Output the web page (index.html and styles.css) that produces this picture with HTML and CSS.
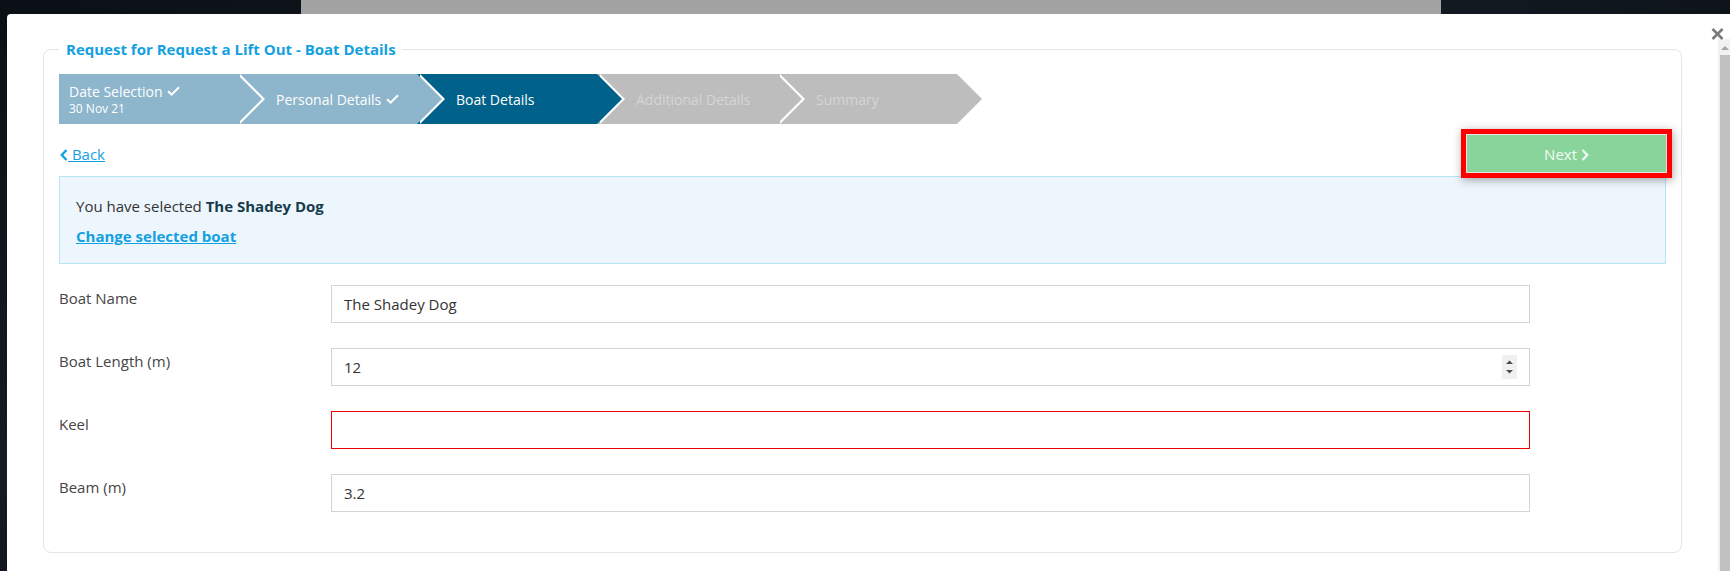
FILE: index.html
```html
<!DOCTYPE html>
<html lang="en">
<head>
<meta charset="utf-8">
<title>Request a Lift Out - Boat Details</title>
<link rel="stylesheet" href="styles.css">
</head>
<body>
<div class="desk">
  <div class="behind-bar"></div>
  <div class="modal">
    <button class="close" type="button" aria-label="Close">
      <svg width="13" height="12" viewBox="0 0 13 12"><path d="M1.5 1 L11.5 11 M11.5 1 L1.5 11" stroke="#7a7a7a" stroke-width="2.6" fill="none"/></svg>
    </button>
    <div class="modal-body">
      <fieldset class="panel">
        <legend class="panel-title">Request for Request a Lift Out - Boat Details</legend>
        <ol class="steps">
          <li class="step done">
            <span class="step-name">Date Selection <svg class="tick" width="13" height="10" viewBox="0 0 13 10"><path d="M1 5.2 L4.6 8.6 L12 1.2" stroke="#fff" stroke-width="2" fill="none"/></svg></span>
            <span class="step-sub">30 Nov 21</span>
          </li>
          <li class="step done">
            <span class="step-name">Personal Details <svg class="tick" width="13" height="10" viewBox="0 0 13 10"><path d="M1 5.2 L4.6 8.6 L12 1.2" stroke="#fff" stroke-width="2" fill="none"/></svg></span>
          </li>
          <li class="step current"><span class="step-name">Boat Details</span></li>
          <li class="step todo"><span class="step-name">Additional Details</span></li>
          <li class="step todo"><span class="step-name">Summary</span></li>
        </ol>
        <div class="nav-row">
          <a class="back" href="#"><svg class="chev-left" width="8" height="12" viewBox="0 0 8 12"><path d="M6.5 1 L1.8 6 L6.5 11" stroke="#13a0e2" stroke-width="2.4" fill="none"/></svg> Back</a>
          <button class="next" type="button">Next <svg class="chev-right" width="8" height="12" viewBox="0 0 8 12"><path d="M1.5 1 L6.2 6 L1.5 11" stroke="#eef8f0" stroke-width="2.4" fill="none"/></svg></button>
        </div>
        <div class="alert">
          <p>You have selected <strong>The Shadey Dog</strong></p>
          <p><a class="change" href="#">Change selected boat</a></p>
        </div>
        <div class="form">
          <div class="form-row">
            <label for="bname">Boat Name</label>
            <input id="bname" type="text" value="The Shadey Dog">
          </div>
          <div class="form-row">
            <label for="blen">Boat Length (m)</label>
            <div class="num-wrap">
              <input id="blen" type="text" value="12">
              <span class="spinner" aria-hidden="true">
                <svg width="15" height="24" viewBox="0 0 15 24"><path d="M4 9 L7.5 5.5 L11 9 Z" fill="#4d4d4d"/><path d="M4 15 L7.5 18.5 L11 15 Z" fill="#4d4d4d"/></svg>
              </span>
            </div>
          </div>
          <div class="form-row">
            <label for="keel">Keel</label>
            <input id="keel" class="invalid" type="text" value="">
          </div>
          <div class="form-row">
            <label for="beam">Beam (m)</label>
            <input id="beam" type="text" value="3.2">
          </div>
        </div>
      </fieldset>
    </div>
    <div class="scrollbar" aria-hidden="true">
      <span class="sb-arrow"><svg width="8" height="5" viewBox="0 0 8 5"><path d="M0 5 L4 1 L8 5 Z" fill="#a3a3a3"/></svg></span>
      <span class="sb-thumb"></span>
    </div>
  </div>
</div>
</body>
</html>
```

FILE: styles.css
```css
html, body {
  margin: 0;
  padding: 0;
}

body {
  width: 1730px;
  height: 571px;
  overflow: hidden;
  background: linear-gradient(160deg, #0b1016 0%, #141c24 40%, #06090d 70%, #111920 100%);
  font-family: "Open Sans", "Noto Sans", sans-serif;
  font-size: 15px;
  color: #333;
}

.desk {
  display: flex;
  flex-direction: column;
  height: 571px;
}

.behind-bar {
  flex: none;
  height: 14px;
  width: 1140px;
  margin-left: 301px;
  background: #a3a3a3;
}

.modal {
  flex: 1;
  position: relative;
  display: flex;
  margin-left: 7px;
  background: #fff;
  border-top-left-radius: 4px;
}

.close {
  position: absolute;
  top: 14px;
  right: 6px;
  width: 13px;
  height: 12px;
  padding: 0;
  border: 0;
  background: none;
  line-height: 0;
}

.modal-body {
  flex: 1;
  min-width: 0;
  padding: 25px 36px 0 36px;
}

.scrollbar {
  flex: none;
  width: 12px;
  margin-top: 25px;
  background: #f1f1f1;
  display: flex;
  flex-direction: column;
  align-items: flex-end;
}

.sb-arrow {
  width: 10px;
  height: 16px;
  display: flex;
  align-items: center;
  justify-content: center;
}

.sb-thumb {
  width: 10px;
  flex: 1;
  background: #c1c1c1;
}

/* panel */
.panel {
  margin: 0;
  min-width: 0;
  border: 1px solid #e3e5e7;
  border-radius: 8px;
  padding: 0 15px 15px;
}

.panel-title {
  padding: 0 6px 0 7px;
  font-size: 15px;
  font-weight: 700;
  line-height: 20px;
  color: #13a0e2;
}

/* wizard steps */
.steps {
  list-style: none;
  margin: 15px 0 0;
  padding: 0;
  display: flex;
  height: 50px;
}

.step {
  --c: #8db5cc;
  position: relative;
  flex: none;
  width: 180px;
  height: 50px;
  box-sizing: border-box;
  padding-left: 39px;
  display: flex;
  flex-direction: column;
  justify-content: center;
  background: var(--c);
  color: #fff;
  font-size: 14px;
  line-height: 19px;
  white-space: nowrap;
}

.step:first-child {
  width: 178px;
  padding-left: 10px;
}

.step::after,
.step::before {
  content: "";
  position: absolute;
  top: 0;
  width: 0;
  height: 0;
  border-top: 25px solid transparent;
  border-bottom: 25px solid transparent;
}

.step::after {
  right: -25px;
  border-left: 25px solid var(--c);
  z-index: 2;
}

.step::before {
  right: -28px;
  border-left: 25px solid #fff;
  z-index: 1;
}

.step.done {
  --c: #8db5cc;
}

.step.current {
  --c: #00628a;
}

.step.todo {
  --c: #bdbdbd;
  color: #d5d5d5;
}

.step-sub {
  font-size: 12px;
  line-height: 16px;
}

.tick {
  vertical-align: 1px;
  margin-left: 1px;
}

/* nav row */
.nav-row {
  display: flex;
  justify-content: space-between;
  align-items: center;
  margin-top: 10px;
}

.back {
  margin-left: 1px;
  color: #13a0e2;
  font-size: 15px;
  text-decoration: underline;
}

.chev-left {
  vertical-align: -1px;
}

.next {
  width: 201px;
  height: 39px;
  margin-right: -1px;
  box-sizing: border-box;
  border: 1px solid #e4e4e4;
  background: #88d49a;
  color: #f3fbf5;
  font-family: inherit;
  font-size: 15px;
  padding: 0;
  outline: 5px solid #ff0000;
  box-shadow: 1px 2px 9px 5px rgba(0, 0, 0, 0.35);
}

.chev-right {
  vertical-align: -1px;
}

/* alert */
.alert {
  margin-top: 3px;
  border: 1px solid #b4e6f5;
  background: #eef6fd;
  padding: 19px 16px 17px;
  line-height: 20px;
  font-size: 15px;
  color: #333;
}

.alert p {
  margin: 0;
}

.alert p + p {
  margin-top: 10px;
}

.alert strong {
  color: #163c4c;
}

.change {
  color: #13a0e2;
  font-weight: 700;
  text-decoration: underline;
}

/* form */
.form {
  display: flex;
  flex-direction: column;
  gap: 25px;
  margin-top: 21px;
  padding-bottom: 25px;
}

.form-row {
  display: grid;
  grid-template-columns: 257px 1199px;
  column-gap: 15px;
  align-items: start;
}

.form-row label {
  padding-top: 3px;
  font-size: 15px;
  line-height: 21px;
  color: #454545;
}

.form-row input {
  display: block;
  width: 100%;
  height: 38px;
  box-sizing: border-box;
  margin: 0;
  border: 1px solid #cfd5db;
  border-radius: 0;
  padding: 0 12px;
  font-family: inherit;
  font-size: 15px;
  color: #333;
  background: #fff;
}

.form-row input.invalid {
  border-color: #ee0000;
}

.num-wrap {
  position: relative;
}

.spinner {
  position: absolute;
  top: 7px;
  right: 13px;
  width: 15px;
  height: 24px;
  background: #f0f0f0;
  line-height: 0;
}
```
